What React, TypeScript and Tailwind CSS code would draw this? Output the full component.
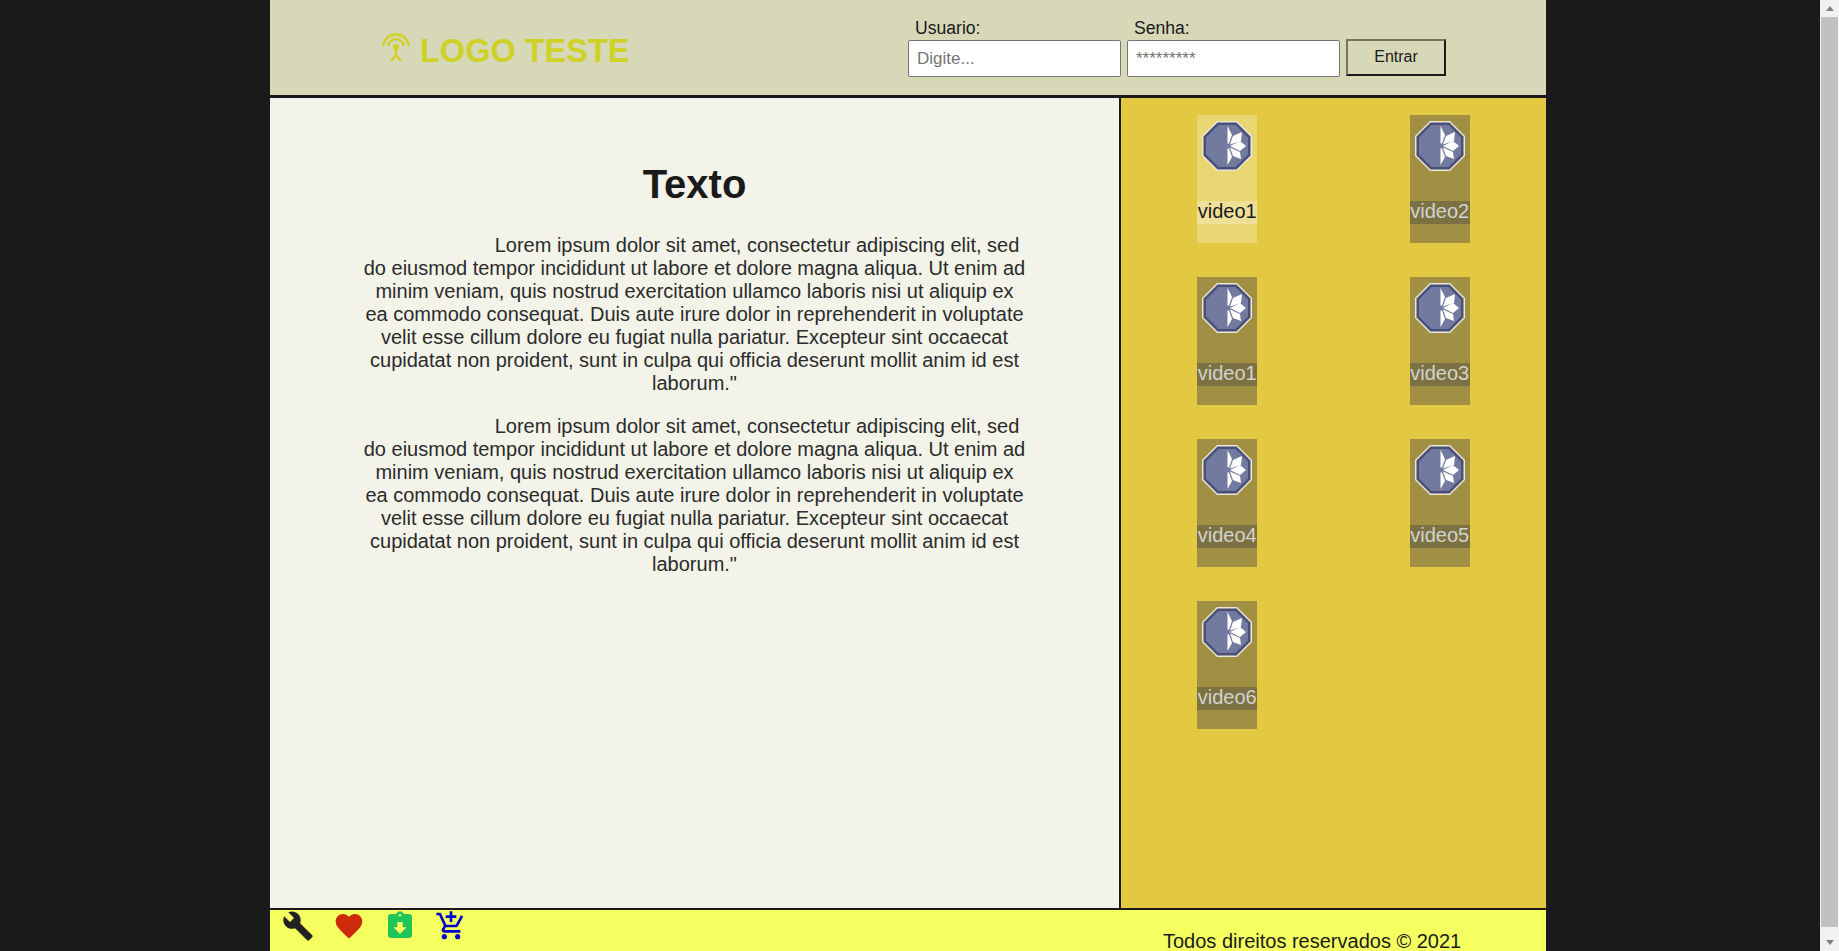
import { MdAddShoppingCart, MdAssignmentReturned, MdBuild, MdFavorite } from "react-icons/md";

const lorem =
  'Lorem ipsum dolor sit amet, consectetur adipiscing elit, sed do eiusmod tempor incididunt ut labore et dolore magna aliqua. Ut enim ad minim veniam, quis nostrud exercitation ullamco laboris nisi ut aliquip ex ea commodo consequat. Duis aute irure dolor in reprehenderit in voluptate velit esse cillum dolore eu fugiat nulla pariatur. Excepteur sint occaecat cupidatat non proident, sunt in culpa qui officia deserunt mollit anim id est laborum."';

const videos = [
  { name: "video1", active: true },
  { name: "video2" },
  { name: "video1" },
  { name: "video3" },
  { name: "video4" },
  { name: "video5" },
  { name: "video6" },
];

const LogoIcon = () => (
  <svg viewBox="0 0 28 28" className="w-7 h-7" fill="none" stroke="#cfd127">
    <path d="M1 13C3 -2.500 25 -2.500 27 13" strokeWidth="2.500" />
    <path d="M6 13C7.500 4 20.500 4 22 13" strokeWidth="2.500" />
    <circle cx="14" cy="14" r="3" fill="#cfd127" stroke="none" />
    <path d="M14 15V22M14 22L9 28M14 22L19 28" strokeWidth="2.500" />
  </svg>
);

const VideoIcon = () => (
  <svg viewBox="0 0 50 50" className="w-[50px] h-[50px]">
    <polygon points="15,0 35,0 50,15 50,35 35,50 15,50 0,35 0,15" fill="#ebe8d8" />
    <polygon points="15.500,1.500 34.500,1.500 48.500,15.500 48.500,34.500 34.500,48.500 15.500,48.500 1.500,34.500 1.500,15.500" fill="#4a4f78" />
    <polygon points="16.500,4 33.500,4 46,16.500 46,33.500 33.500,46 16.500,46 4,33.500 4,16.500" fill="#737a9f" />
    <g fill="#ffffff">
      <polygon points="25.500,5 30,14 27,22.500 25.500,22.500" />
      <polygon points="40,11 39,20 28,23.500 31,15" />
      <polygon points="44,25 38,30 28,25 38,20" />
      <polygon points="39,38 31,35 28,26.500 38,31" />
      <polygon points="25.500,44 25.500,27.500 27,27.500 30,36" />
    </g>
  </svg>
);

function VideoCard({ name, active }: { name: string; active?: boolean }) {
  return (
    <div className={`w-[60px] h-[128px] pt-[6px] flex flex-col items-center ${active ? "bg-[#e9d673]" : "bg-[#a18f43]"}`}>
      <VideoIcon />
      <span
        className={`mt-[30px] w-full h-[23px] text-center text-xl leading-[21px] ${
          active ? "bg-[#eee099] text-[#1a1a1a]" : "bg-[#7c7143] text-[#d3d3cf]"
        }`}
      >
        {name}
      </span>
    </div>
  );
}

export default function App() {
  return (
    <div className="flex h-[951px] w-full overflow-hidden bg-[#1a1a1a] font-['Liberation_Sans',Arial,sans-serif] text-[#1a1a1a]">
      <div className="ml-[270px] w-[1276px] flex flex-col">
        <header className="h-[98px] flex-none flex border-b-[3px] border-[#1a1a1a] bg-[#d6d8b8]">
          <div className="ml-[112px] mt-[33px] flex items-start gap-[10px]">
            <LogoIcon />
            <span className="text-[32.5px] leading-[37px] font-bold text-[#cfd127]">LOGO TESTE</span>
          </div>
          <form className="ml-auto mr-[100px] mt-[17px] flex items-start gap-[6px]">
            <label className="flex flex-col w-[213px] text-[17.6px] leading-[23px]">
              <span className="pl-[7px]">Usuario:</span>
              <input
                placeholder="Digite..."
                className="h-[37px] px-2 bg-white border border-[#767676] rounded-[2px] text-[17px] placeholder:text-[#757575]"
              />
            </label>
            <label className="flex flex-col w-[213px] text-[17.6px] leading-[23px]">
              <span className="pl-[7px]">Senha:</span>
              <input
                placeholder="*********"
                className="h-[37px] px-2 bg-white border border-[#767676] rounded-[2px] text-[17px] placeholder:text-[#757575]"
              />
            </label>
            <button
              type="button"
              className="mt-[22px] w-[100px] h-[37px] pb-[2px] text-base border-2 border-t-[#767660] border-l-[#767660] border-r-[#1a1a1a] border-b-[#1a1a1a] bg-[#d6d8b8]"
            >
              Entrar
            </button>
          </form>
        </header>

        <main className="flex-1 flex min-h-0">
          <article className="w-[849px] flex-none bg-[#f3f3e9] pt-[63px] px-[92.5px]">
            <h1 className="text-[40px] leading-[46px] font-bold text-center">Texto</h1>
            <p className="mt-[27px] text-xl leading-[23px] text-center indent-[125px] text-[#2b2b2b]">{lorem}</p>
            <p className="mt-[20px] text-xl leading-[23px] text-center indent-[125px] text-[#2b2b2b]">{lorem}</p>
          </article>
          <aside className="flex-1 border-l-2 border-[#1a1a1a] bg-[#e2c941] pt-[17px]">
            <div className="grid grid-cols-2 gap-y-[34px] justify-items-center">
              {videos.map((video, i) => (
                <VideoCard key={i} name={video.name} active={video.active} />
              ))}
            </div>
          </aside>
        </main>

        <footer className="h-[43px] flex-none flex border-t-2 border-[#1a1a1a] bg-[#f5ff60]">
          <div className="pl-[12px] flex items-start gap-[19px]">
            <MdBuild className="w-8 h-8 text-[#222222]" />
            <MdFavorite className="w-8 h-8 text-[#cc2a0a]" />
            <MdAssignmentReturned className="w-8 h-8 text-[#1ec65a]" />
            <MdAddShoppingCart className="w-8 h-8 text-[#0000cc]" />
          </div>
          <span className="ml-[696px] mt-[21px] text-xl leading-[20px] whitespace-nowrap">Todos direitos reservados © 2021</span>
        </footer>
      </div>

      <div className="ml-auto w-[19px] flex-none flex flex-col items-center bg-[#f1f1f1]">
        <div className="h-[17px] flex-none flex items-center justify-center">
          <div className="w-0 h-0 border-x-[4px] border-x-transparent border-b-[5px] border-b-[#808080]" />
        </div>
        <div className="w-[17px] h-[910px] flex-none bg-[#c1c1c1]" />
        <div className="mt-auto h-[17px] flex-none flex items-center justify-center">
          <div className="w-0 h-0 border-x-[4px] border-x-transparent border-t-[5px] border-t-[#808080]" />
        </div>
      </div>
    </div>
  );
}
